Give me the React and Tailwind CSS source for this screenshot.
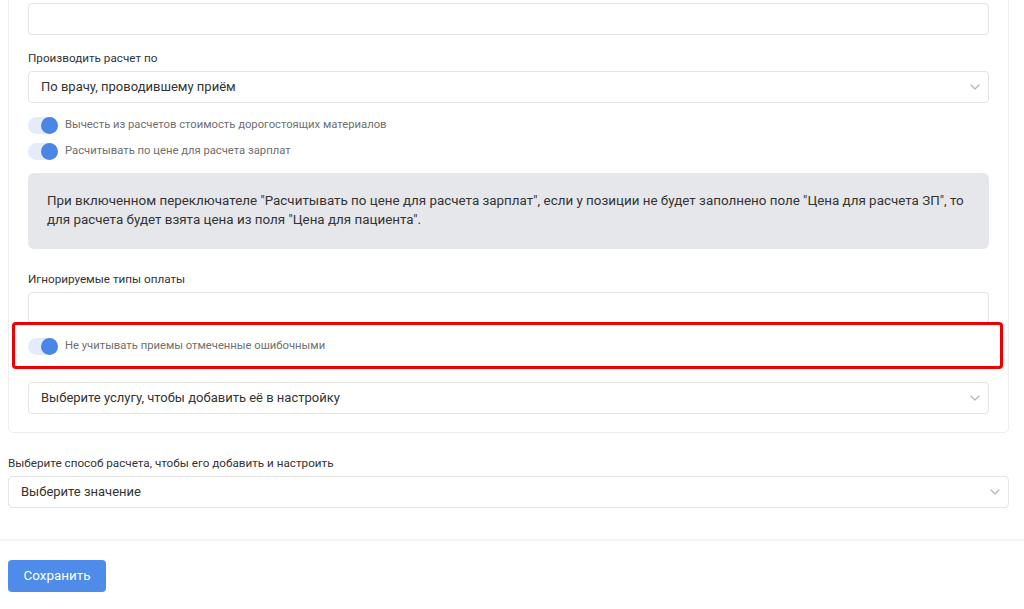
import React from "react";

const Chevron = () => (
  <svg width="10" height="6" viewBox="0 0 10 6" fill="none" className="shrink-0">
    <path d="M1 1l4 4 4-4" stroke="#b5b5b5" strokeWidth="1.2" strokeLinecap="round" strokeLinejoin="round" />
  </svg>
);

const Select = ({ text, className = "" }) => (
  <div className={`h-[32px] border border-[#e4e4e4] rounded-[4px] flex items-center justify-between pl-[12px] pr-[8px] bg-white ${className}`}>
    <span className="text-[13px] text-[#333]">{text}</span>
    <Chevron />
  </div>
);

const Toggle = ({ label }) => (
  <div className="h-[26px] flex items-center gap-[7px]">
    <div className="w-[30px] h-[17px] rounded-full bg-[#e4ecfb] flex justify-end">
      <div className="w-[17px] h-[17px] rounded-full bg-[#4a86e6]" />
    </div>
    <span className="text-[11.25px] text-[#6f6f6f]">{label}</span>
  </div>
);

export default function App() {
  return (
    <div className="relative w-[1024px] h-[609px] overflow-hidden bg-white" style={{ fontFamily: "Roboto, 'Noto Sans', sans-serif" }}>
      <div className="ml-[8px] w-[1001px] mt-[-20px] border border-[#eeeeee] rounded-[5px] pt-[22px] pb-[18px] px-[19px] flex flex-col">
        <div className="h-[32px] border border-[#e4e4e4] rounded-[4px]" />
        <div className="mt-[15px] text-[11.7px] leading-[16px] text-[#333]">Производить расчет по</div>
        <Select text="По врачу, проводившему приём" className="mt-[5px]" />
        <div className="mt-[9px]">
          <Toggle label="Вычесть из расчетов стоимость дорогостоящих материалов" />
          <Toggle label="Расчитывать по цене для расчета зарплат" />
        </div>
        <div className="mt-[9px] h-[76px] rounded-[6px] bg-[#e6e7eb] px-[19px] pt-[18px] text-[13.4px] leading-[19px] text-[#333]">
          При включенном переключателе "Расчитывать по цене для расчета зарплат", если у позиции не будет заполнено поле "Цена для расчета ЗП", то для расчета будет взята цена из поля "Цена для пациента".
        </div>
        <div className="mt-[22px] text-[11.7px] leading-[16px] text-[#333]">Игнорируемые типы оплаты</div>
        <div className="mt-[5px] h-[32px] border border-[#e4e4e4] rounded-[4px]" />
        <div className="mt-[9px]">
          <Toggle label="Не учитывать приемы отмеченные ошибочными" />
        </div>
        <Select text="Выберите услугу, чтобы добавить её в настройку" className="mt-[23px]" />
      </div>
      <div className="mt-[22px] ml-[8px] text-[11.7px] leading-[16px] text-[#333]">Выберите способ расчета, чтобы его добавить и настроить</div>
      <Select text="Выберите значение" className="mt-[5px] ml-[8px] w-[1001px]" />
      <div className="mt-[31px] h-[2px] bg-[#f3f4f6]" />
      <button className="mt-[19px] ml-[8px] h-[32px] w-[98px] rounded-[4px] bg-[#4f8be8] text-white text-[13.4px]">Сохранить</button>
      <div className="absolute left-[12px] top-[322px] w-[991px] h-[47px] border-[3px] border-[#ef0000] rounded-[4px]" />
    </div>
  );
}
